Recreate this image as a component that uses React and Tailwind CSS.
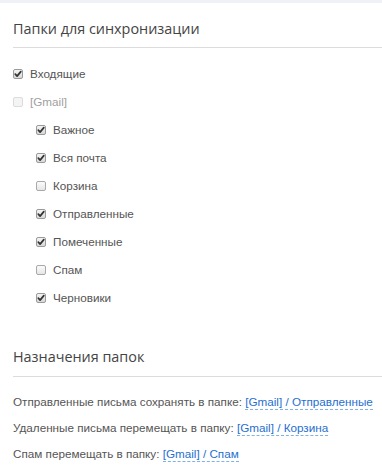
import React from "react";

function Box({ checked, disabled }) {
  return (
    <span
      className={
        "flex h-[10px] w-[10px] shrink-0 items-center justify-center rounded-[2px] border " +
        (disabled
          ? "border-[#dcdcdc] bg-[#f4f4f4]"
          : checked
          ? "border-[#9a9a9a] bg-gradient-to-b from-[#f4f4f4] to-[#d8d8d8]"
          : "border-[#a9a9a9] bg-gradient-to-b from-[#fbfbfb] to-[#e6e6e6]")
      }
    >
      {checked && (
        <svg width="8" height="8" viewBox="0 0 8 8">
          <path d="M1.3 4.2 L3.1 6.1 L6.8 1.6" fill="none" stroke="#333" strokeWidth="1.7" strokeLinecap="round" strokeLinejoin="round" />
        </svg>
      )}
    </span>
  );
}

function Item({ label, checked, disabled, nested }) {
  return (
    <div className={"flex h-[28px] items-center gap-[7px] " + (nested ? "pl-[23px]" : "")}>
      <Box checked={checked} disabled={disabled} />
      <span className={"text-[11.7px] " + (disabled ? "text-[#a0a0a0]" : "text-[#555]")}>{label}</span>
    </div>
  );
}

function Link({ children }) {
  return (
    <span className="border-b border-dashed border-[#7fb0e6] pb-[1px] text-[#1f6fd0]">{children}</span>
  );
}

export default function App() {
  const sans = { fontFamily: '"Liberation Sans", Arial, sans-serif' };
  const head = { fontFamily: '"Open Sans", Arial, sans-serif' };
  return (
    <div className="min-h-[471px] w-[382px] bg-white" style={sans}>
      <div className="h-[3px] bg-[#eef2f6]" />
      <div className="pl-[13px]">
        <div
          className="border-b border-[#dcdcdc] pb-[8px] pt-[16px] text-[14.4px] leading-[20px] text-[#444]"
          style={head}
        >
          Папки для синхронизации
        </div>
        <div className="pt-[12px]">
          <Item label="Входящие" checked />
          <Item label="[Gmail]" disabled />
          <Item label="Важное" checked nested />
          <Item label="Вся почта" checked nested />
          <Item label="Корзина" nested />
          <Item label="Отправленные" checked nested />
          <Item label="Помеченные" checked nested />
          <Item label="Спам" nested />
          <Item label="Черновики" checked nested />
        </div>
        <div
          className="mt-[35px] border-b border-[#dcdcdc] pb-[9px] text-[14.4px] leading-[20px] text-[#444]"
          style={head}
        >
          Назначения папок
        </div>
        <div className="pt-[12px] text-[11.7px] text-[#555]">
          <div className="flex h-[26px] items-center whitespace-nowrap">
            <span>
              Отправленные письма сохранять в папке: <Link>[Gmail] / Отправленные</Link>
            </span>
          </div>
          <div className="flex h-[26px] items-center whitespace-nowrap">
            <span>
              Удаленные письма перемещать в папку: <Link>[Gmail] / Корзина</Link>
            </span>
          </div>
          <div className="flex h-[26px] items-center whitespace-nowrap">
            <span>
              Спам перемещать в папку: <Link>[Gmail] / Спам</Link>
            </span>
          </div>
        </div>
      </div>
    </div>
  );
}
